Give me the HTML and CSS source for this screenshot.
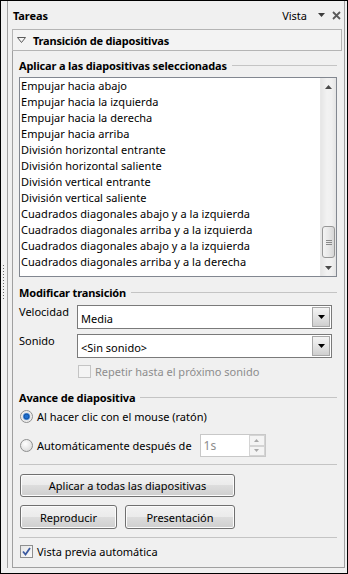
FILE: index.html
```html
<!DOCTYPE html>
<html lang="es">
<head>
<meta charset="utf-8">
<title>Tareas</title>
<link rel="stylesheet" href="styles.css">
</head>
<body>
<div class="frame">
  <div class="splitter"><div class="grip"></div></div>
  <div class="pane">
    <div class="titlebar">
      <span class="title">Tareas</span>
      <span class="vista">Vista</span>
      <svg class="caret" width="7" height="4" viewBox="0 0 7 4"><path d="M0 0H7L3.5 4Z" fill="#3c3c3c"/></svg>
      <svg class="close" width="9" height="9" viewBox="0 0 9 9"><path d="M1 1L8 8M8 1L1 8" stroke="#5a5a5a" stroke-width="1.8"/></svg>
    </div>
    <div class="section-head">
      <svg class="twisty" width="9" height="6" viewBox="0 0 9 6"><path d="M0.5 0.5H8.5L4.5 5.5Z" fill="none" stroke="#5a5a5a"/></svg>
      <span>Transición de diapositivas</span>
    </div>
    <div class="content">
      <div class="group-title"><span>Aplicar a las diapositivas seleccionadas</span></div>
      <div class="listbox">
        <ul class="items">
          <li>Empujar hacia abajo</li>
          <li>Empujar hacia la izquierda</li>
          <li>Empujar hacia la derecha</li>
          <li>Empujar hacia arriba</li>
          <li>División horizontal entrante</li>
          <li>División horizontal saliente</li>
          <li>División vertical entrante</li>
          <li>División vertical saliente</li>
          <li>Cuadrados diagonales abajo y a la izquierda</li>
          <li>Cuadrados diagonales arriba y a la izquierda</li>
          <li>Cuadrados diagonales abajo y a la izquierda</li>
          <li>Cuadrados diagonales arriba y a la derecha</li>
        </ul>
        <div class="vscroll">
          <div class="sb-btn"><svg width="7" height="4" viewBox="0 0 7 4"><path d="M3.5 0L7 4H0Z" fill="#4a4a4a"/></svg></div>
          <div class="sb-track"></div>
          <div class="sb-thumb"><span></span><span></span><span></span></div>
          <div class="sb-btn"><svg width="7" height="4" viewBox="0 0 7 4"><path d="M0 0H7L3.5 4Z" fill="#4a4a4a"/></svg></div>
        </div>
      </div>

      <div class="group-title gt-mod"><span>Modificar transición</span></div>
      <div class="field-row">
        <span class="label">Velocidad</span>
        <div class="combo"><span class="combo-text">Media</span><span class="combo-btn"><svg width="7" height="4" viewBox="0 0 7 4"><path d="M0 0H7L3.5 4Z" fill="#000"/></svg></span></div>
      </div>
      <div class="field-row">
        <span class="label">Sonido</span>
        <div class="combo"><span class="combo-text">&lt;Sin sonido&gt;</span><span class="combo-btn"><svg width="7" height="4" viewBox="0 0 7 4"><path d="M0 0H7L3.5 4Z" fill="#000"/></svg></span></div>
      </div>
      <div class="check-row indent disabled">
        <span class="checkbox off"></span>
        <span>Repetir hasta el próximo sonido</span>
      </div>

      <div class="group-title gt-adv"><span>Avance de diapositiva</span></div>
      <div class="radio-row r1">
        <span class="radio checked"></span>
        <span>Al hacer clic con el mouse (ratón)</span>
      </div>
      <div class="radio-row r2">
        <span class="radio"></span>
        <span>Automáticamente después de</span>
        <div class="spin">
          <span class="spin-text">1s</span>
          <div class="spin-btns">
            <span class="spin-b"><svg width="5" height="3" viewBox="0 0 5 3"><path d="M2.5 0L5 3H0Z" fill="#a8a8a8"/></svg></span>
            <span class="spin-b"><svg width="5" height="3" viewBox="0 0 5 3"><path d="M0 0H5L2.5 3Z" fill="#a8a8a8"/></svg></span>
          </div>
        </div>
      </div>

      <div class="sep s1"></div>
      <div class="btn-row b1">
        <button class="btn wide">Aplicar a todas las diapositivas</button>
      </div>
      <div class="btn-row b2">
        <button class="btn play">Reproducir</button>
        <button class="btn show">Presentación</button>
      </div>
      <div class="sep s2"></div>
      <div class="check-row preview">
        <span class="checkbox on"><svg width="9" height="9" viewBox="0 0 9 9"><path d="M1 4.5L3.5 7.5L8 1" fill="none" stroke="#3b5aa0" stroke-width="1.8"/></svg></span>
        <span>Vista previa automática</span>
      </div>
    </div>
  </div>
</div>
</body>
</html>
```

FILE: styles.css
```css
* { box-sizing: border-box; }
html, body { margin: 0; padding: 0; }
body {
  width: 348px;
  height: 574px;
  background: #f0f0f0;
  font-family: "Noto Sans", "Open Sans", sans-serif;
  font-size: 11px;
  color: #000;
  overflow: hidden;
}
.frame {
  width: 348px;
  height: 574px;
  border: 1px solid #000;
  display: flex;
  background: #f0f0f0;
}
.splitter {
  width: 6px;
}
.grip {
  margin: 264px 0 0 2px;
  width: 1px;
  height: 34px;
  background: repeating-linear-gradient(to bottom, #6a6a6a 0 1px, transparent 1px 3px);
}
.pane {
  width: 338px;
  height: 567px;
  border-left: 1px solid #a0a0a0;
  border-right: 1px solid #a0a0a0;
  display: flex;
  flex-direction: column;
}
.titlebar {
  height: 28px;
  display: flex;
  align-items: center;
  padding: 0 3px 0 5px;
}
.title { font-weight: bold; flex: 1; letter-spacing: -0.1px; }
.vista { margin-right: 11px; }
.caret { margin-right: 7px; }
.section-head {
  height: 22px;
  margin: 0 2px 0 4px;
  border: 1px solid #b4b4b4;
  background: #f3f3f3;
  display: flex;
  align-items: center;
  padding-left: 4px;
  font-weight: bold;
  letter-spacing: -0.2px;
}
.twisty { margin-right: 7px; }
.content {
  flex: 1;
  margin-left: 4px;
  border-left: 1px solid #a0a0a0;
  border-bottom: 1px solid #a0a0a0;
  padding: 6px 7px 0 6px;
  display: flex;
  flex-direction: column;
}
.group-title {
  height: 16px;
  display: flex;
  align-items: center;
  font-weight: bold;
  letter-spacing: -0.15px;
}
.group-title::after {
  content: "";
  flex: 1;
  height: 1px;
  background: #c4c4c4;
  margin-left: 5px;
}
.listbox {
  margin-top: 4px;
  height: 200px;
  border: 1px solid #828790;
  background: #fff;
  display: flex;
}
.items {
  list-style: none;
  margin: 0;
  padding: 0;
  flex: 1;
}
.items li {
  height: 16px;
  line-height: 16px;
  padding-left: 1px;
  white-space: nowrap;
  letter-spacing: 0.05px;
}
.vscroll {
  width: 16px;
  display: flex;
  flex-direction: column;
  background: linear-gradient(to right, #e6e6e6, #f2f2f2 40%, #f0f0f0 70%, #e4e4e4);
  border-left: 1px solid #e8e8e8;
}
.sb-btn {
  height: 17px;
  display: flex;
  align-items: center;
  justify-content: center;
}
.sb-track { flex: 1; }
.sb-thumb {
  height: 32px;
  margin: 0 1px 1px 1px;
  border: 1px solid #979797;
  border-radius: 3px;
  background: linear-gradient(to right, #f4f4f4, #e8e8e8 50%, #d6d6d6);
  display: flex;
  flex-direction: column;
  align-items: center;
  justify-content: center;
  gap: 1px;
}
.sb-thumb span {
  width: 6px;
  height: 1px;
  background: #8a8a8a;
}
.gt-mod { margin-top: 7px; }
.field-row {
  height: 24px;
  margin-top: 5px;
  display: flex;
}
.label {
  width: 58px;
  line-height: 14px;
}
.combo {
  flex: 1;
  margin-right: 5px;
  border: 1px solid #7a7a7a;
  background: #fff;
  display: flex;
  align-items: center;
  padding: 1px;
}
.combo-text {
  flex: 1;
  padding-left: 2px;
  padding-top: 3px;
}
.combo-btn {
  width: 18px;
  height: 20px;
  border: 1px solid #a8a8a8;
  background: linear-gradient(to bottom, #f4f4f4, #e4e4e4 50%, #cfcfcf);
  display: flex;
  align-items: center;
  justify-content: center;
}
.check-row {
  height: 16px;
  display: flex;
  align-items: center;
}
.indent {
  margin-top: 5px;
  padding-left: 59px;
}
.disabled { color: #8d8d8d; }
.checkbox {
  width: 13px;
  height: 13px;
  margin-right: 4px;
  display: flex;
  align-items: center;
  justify-content: center;
}
.checkbox.off {
  border: 1px solid #c4c4c4;
  background: #f4f4f4;
}
.checkbox.on {
  border: 1px solid #8e8f8f;
  background: linear-gradient(135deg, #e6e6e6, #fafafa);
}
.gt-adv { margin-top: 10px; }
.radio-row {
  display: flex;
  align-items: center;
  padding-left: 1px;
}
.r1 { height: 16px; margin-top: 3px; }
.r2 { height: 23px; margin-top: 10px; }
.radio {
  width: 13px;
  height: 13px;
  border-radius: 50%;
  border: 1px solid #8e8f8f;
  background: radial-gradient(circle at 40% 35%, #ffffff, #dcdcdc 80%);
  margin-right: 4px;
}
.radio.checked {
  background: radial-gradient(circle, #1e6fd0 0 1.5px, #0d4d9d 2.5px, #7fb0e8 3.5px, #e4e4e4 4px, #f6f6f6 6px);
}
.spin {
  width: 66px;
  height: 23px;
  margin-left: 8px;
  border: 1px solid #c8c8c8;
  background: #fff;
  display: flex;
  align-items: center;
}
.spin-text {
  flex: 1;
  color: #8d8d8d;
  padding-left: 3px;
  font-size: 12px;
}
.spin-btns {
  width: 16px;
  height: 21px;
  display: flex;
  flex-direction: column;
}
.spin-b {
  flex: 1;
  border: 1px solid #d4d4d4;
  background: #f4f4f4;
  display: flex;
  align-items: center;
  justify-content: center;
}
.sep {
  height: 1px;
  background: #c4c4c4;
}
.s1 { margin-top: 7px; }
.s2 { margin-top: 8px; }
.btn-row {
  display: flex;
  gap: 8px;
  padding-left: 1px;
}
.b1 { margin-top: 9px; }
.b2 { margin-top: 8px; }
.btn {
  height: 23px;
  border: 1px solid #707070;
  border-radius: 3px;
  background: linear-gradient(to bottom, #f2f2f2 0, #ebebeb 50%, #dddddd 50%, #cfcfcf 100%);
  font: inherit;
  color: #000;
  padding: 0;
  box-shadow: inset 0 0 0 1px #fcfcfc;
}
.wide { width: 215px; }
.play { width: 97px; height: 24px; }
.show { width: 110px; height: 24px; }
.preview { margin-top: 5px; padding-left: 1px; }
```
